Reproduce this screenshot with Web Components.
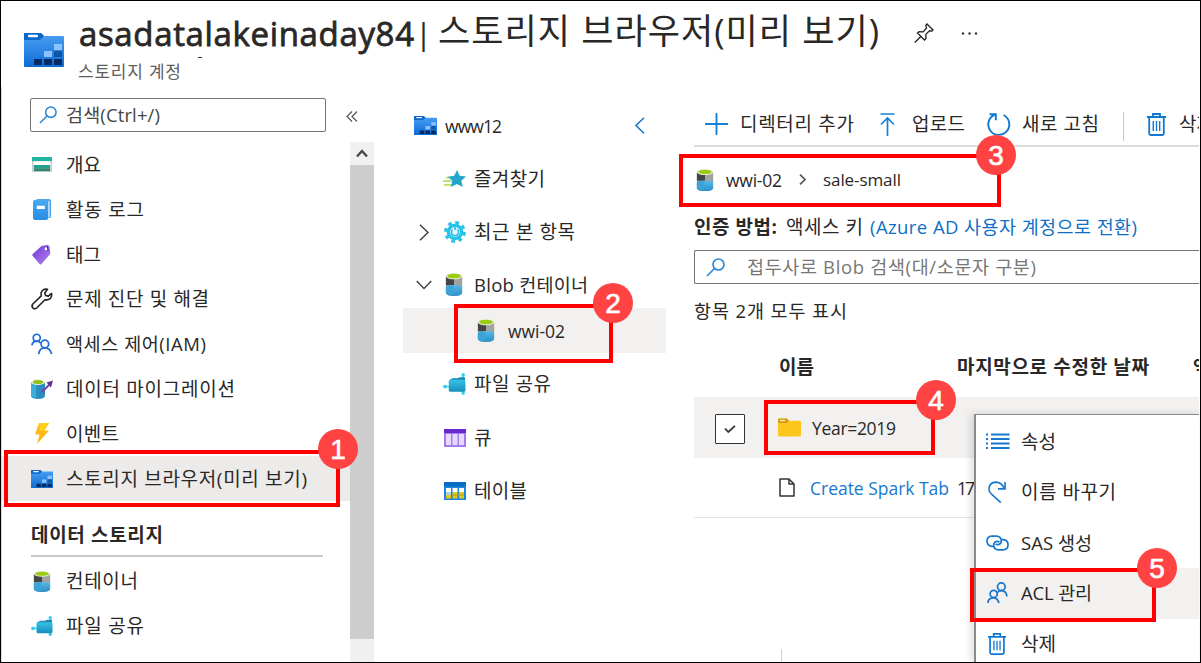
<!DOCTYPE html>
<html lang="ko">
<head>
<meta charset="utf-8">
<title>asadatalakeinaday84 | 스토리지 브라우저(미리 보기)</title>
<style>
html,body{margin:0;padding:0;background:#fff}
body{font-family:"Open Sans","Noto Sans CJK KR",sans-serif;color:#292827;width:1201px;height:663px;overflow:hidden}
</style>
</head>
<body>
<storage-page></storage-page>
<script>
const cylinder = `<defs><linearGradient id="c" x2="0" y2="1"><stop stop-color="#55b9e4"/><stop offset="1" stop-color="#2e90c9"/></linearGradient></defs>
<path d="M1 3h18v17q-1 3-9 3t-9-3z" fill="#9a9a9a"/><path d="M1 4h9v9l-9-1z" fill="#454545"/><path d="M10 5h9v8h-9z" fill="#a2a2a2"/><path d="M1 13q9-2 18 0v7q-1 3-9 3t-9-3z" fill="url(#c)"/><path d="M3 13h6v9q-5 0-8-2v-6z" fill="#3ca3d8"/><ellipse cx="10" cy="3.2" rx="9" ry="3.1" fill="#e4ecd2"/><ellipse cx="10" cy="3" rx="7.6" ry="2.3" fill="#9ccc12"/>`;
const folder = `<defs><linearGradient id="f" x2="0" y2="1"><stop stop-color="#4da2f4"/><stop offset="1" stop-color="#0c6bd4"/></linearGradient></defs>
<path d="M0 1q0-1 1-1h16l3 3h19q1 0 1 1v29q0 1-1 1H1q-1 0-1-1z" fill="url(#f)"/><path d="M0 7V1q0-1 1-1h16l3 3-3 3q-1 1-3 1z" fill="#0a66c8"/><rect x="4" y="1.8" width="10" height="2.4" rx="1" fill="#fff"/>
<path d="M30 11h8v6h-8zM20 18h8v6h-8z" fill="#8dc1ff"/><path d="M30 18h8v6h-8z" fill="#0d58a6"/><path d="M10 26h8v6h-8zM20 26h8v6h-8zM30 26h8v6h-8z" fill="#062b63"/>`;
const share = `<defs><linearGradient id="s" x2="0" y2="1"><stop stop-color="#38c3e6"/><stop offset="1" stop-color="#168dbd"/></linearGradient></defs><path d="M2 13h6M19 2v17" stroke="#35c8ee" stroke-width="1.2"/><circle cx="2" cy="13" r="1.9" fill="#35cdf2"/><circle cx="19.3" cy="1.8" r="1.7" fill="#35cdf2"/><circle cx="19.3" cy="19.2" r="1.7" fill="#35cdf2"/><path d="M6 7l3-2h5l2-1h5v13H6z" fill="#188bb5"/><rect x="5.5" y="6.5" width="16" height="11.5" rx="1.5" fill="url(#s)"/>`;
const trash = `<g fill="none" stroke="#0f78d4" stroke-width="1.8"><path d="M0 4h19M6 4V1h7v3M2.2 4v16.5q0 1.5 1.5 1.5h11.600q1.500 0 1.500-1.500V4"/><path d="M6.300 8v10M9.500 8v10M12.700 8v10" stroke-width="1.400"/></g>`;
const lens = c => `<g fill="none" stroke="${c}" stroke-width="1.6"><circle cx="12.500" cy="6.500" r="5.500"/><path d="M8.500 10.500L1 18"/></g>`;
const people = c => `<g fill="none" stroke="${c}" stroke-width="1.800"><circle cx="6" cy="5" r="3.700"/><path d="M1 13q.5-4.500 5-4.500 3 0 4 2"/><circle cx="14.500" cy="11.500" r="4"/><path d="M8 22q1-6.500 6.500-6.500t7 6.500"/></g>`;
const ICONS = {
  folder:['40 34',folder], cylinder:['20 23',cylinder], share:['22 21',share], trash:['19 23',trash],
  lens:['19 19',lens('#2a86d8')],
  people:['23 23',people('#1d6ad8')],
  acl:['22 23',`<g fill="none" stroke="#1a73c8" stroke-width="1.800"><circle cx="15" cy="5" r="4"/><path d="M11 11q1-2 4-2 5 0 6 6"/><circle cx="7" cy="12.500" r="3.700"/><path d="M1 22q0-5.500 6-5.500 4 0 5.500 5.500"/></g>`],
  overview:['20 17',`<path d="M0 4h20v12H0z" fill="#c9cbcd"/><path d="M0 0h20v4.500H0z" fill="#20b5a0"/><path d="M1.500 4.500h17v4h-17z" fill="#fff"/><path d="M2 8.500h16v3.500H2z" fill="#22a18d"/><path d="M2 12h16v3H2z" fill="#2d8877"/>`],
  log:['19 22',`<defs><linearGradient id="l" x2="0" y2="1"><stop stop-color="#45a9f2"/><stop offset="1" stop-color="#2a8ce2"/></linearGradient></defs><rect x="3" y="0" width="16" height="20" rx="2" fill="#4ea4e4"/><path d="M16 2h1.500v17H16z" fill="#d6ecfb"/><rect x="0" y="1" width="16" height="21" rx="2" fill="url(#l)"/><rect x="4" y="7" width="8.500" height="3.500" fill="#fff"/>`],
  tag:['20 20',`<defs><linearGradient id="t" x2="1" y2="1"><stop stop-color="#6d32d8"/><stop offset="1" stop-color="#b68ae8"/></linearGradient></defs><path d="M10 1l6-1q2 0 2.500 2l.8 6q0 1-1 2L10 19q-1 1-2 0L.8 11q-1-1 0-2z" fill="url(#t)"/><circle cx="14.800" cy="3.800" r="1.500" fill="#fff"/><path d="M16 1l1 5" stroke="#4c1ab0" stroke-width="1"/>`],
  wrench:['22 22',`<path d="M20.600 5.500l-3.300 2.600-2.700-.6-.9-2.600 2.800-3.600q-3.300-.8-5.400 1.500-1.800 2.200-.8 5L1.800 16q-1.600 2 0 3.800 2 1.800 3.900.2l8.300-8.300q3.200.8 5.400-1.300 1.900-2.100 1.200-4.900z" fill="none" stroke="#222" stroke-width="1.600" stroke-linejoin="round"/>`],
  migrate:['22 20',`<path d="M0 3h14v14q-1 3-7 3t-7-3z" fill="#2c8cbd"/><path d="M0 3h5v16q-4-.5-5-2z" fill="#3caddb"/><ellipse cx="7" cy="3" rx="7" ry="3" fill="#eef3dc"/><ellipse cx="7" cy="3" rx="5.200" ry="2.100" fill="#8fc31a"/><path d="M11 13l8-8" stroke="#7a3fa8" stroke-width="2"/><path d="M15.500 3.500L22 1.500 20 8.500z" fill="#663090"/>`],
  bolt:['16 21',`<path d="M5 0h10L10.500 7.500H15L3 21l2.500-9.500H1z" fill="#fdb913"/><path d="M5 0h10L10.500 7.500 6 8z" fill="#ffce20"/>`],
  star:['23 19',`<path d="M3 8h8M0 11.800h9M1 15.600h8" stroke="#b5e06a" stroke-width="1.800"/><path d="M14 0l2.700 6.200 6.300.7-4.700 4.400L19.700 18 14 14.700 7.800 18l1.600-6.700L4.900 7l6.300-.8z" fill="#22a6cc"/>`],
  gear:['22 22',`<circle cx="11" cy="11" r="6.500" fill="none" stroke="#25c2ea" stroke-width="3.600"/><circle cx="11" cy="11" r="9.400" fill="none" stroke="#25c2ea" stroke-width="3" stroke-dasharray="3.700 3.682"/><circle cx="11" cy="11" r="4.900" fill="#e4f8fd"/><path d="M8.500 8.500a3.600 3.600 0 1 0 5 0M11 6v3" fill="none" stroke="#25bde4" stroke-width="1.600"/>`],
  queue:['22 18',`<path d="M0 0h22v18H0z" fill="#a57cec"/><path d="M0 0h22v4H0z" fill="#6a28cc"/><path d="M2 5h5v11H2zM8.500 5h5v11h-5zM15 5h5v11h-5z" fill="#e8d9ff"/>`],
  table:['22 18',`<path d="M0 0h22v18H0z" fill="#1f86dd"/><path d="M0 0h22v4.500H0z" fill="#0a6cc4"/><path d="M2 6h5v4H2zM8.500 6h5v4h-5zM15 6h5v4h-5z" fill="#fff"/><path d="M2 10h5v3H2z" fill="#9ed5ef"/><path d="M2 13h5v3.500H2zM8.500 10h5v6.500h-5zM15 10h5v6.500h-5z" fill="#e0c81c"/><path d="M8 13h12" stroke="#b69c10"/>`],
  plus:['23 22',`<path d="M0 11h23M11.500 0v22" stroke="#1580d8" stroke-width="1.900"/>`],
  upload:['15 23',`<path d="M.5 1h14M7.500 23V5M1 11.500L7.500 5l6.500 6.500" fill="none" stroke="#1580d8" stroke-width="1.700"/>`],
  refresh:['24 23',`<path d="M16.500 2A10.500 10.500 0 1 1 8 1.600M2.600 1.200h6.200v6" fill="none" stroke="#0f78d4" stroke-width="1.900"/>`],
  yellow:['23 19',`<path d="M0 2q0-1.500 1.500-1.500H9l2 2.200h10.500Q23 2.700 23 4v13q0 1.500-1.500 1.500h-20Q0 18.500 0 17z" fill="#fcc61c"/><path d="M0 2q0-1.500 1.500-1.500H9L11 2.700 9 5H0z" fill="#d99c10"/><path d="M2 2.500h5" stroke="#fff3c0" stroke-width="1.300"/>`],
  file:['16 19',`<path d="M1 1h9l5 5v12H1zM10 1v5h5" fill="#fff" stroke="#333" stroke-width="1.500" stroke-linejoin="round"/>`],
  check:['12 8',`<path d="M1 3.500L4.300 7 11 .8" fill="none" stroke="#333" stroke-width="1.800"/>`],
  list:['24 17',`<path d="M0 1.500h2M0 6h2M0 10.500h2M0 15h2M5 1.500h18.500M5 6h18.500M5 10.500h18.500M5 15h18.500" stroke="#1878d0" stroke-width="1.900"/>`],
  rename:['19 23',`<path d="M13.500 22.500L4 14Q1 11.500 1 8.500 1.200 1.500 8.500 1.200 14 1.200 17.500 8M18 1v7.200h-7.500" fill="none" stroke="#1878d0" stroke-width="1.700"/>`],
  link:['24 17',`<g fill="none" stroke="#1878d0" stroke-width="1.800"><path d="M8 12H6Q1 11.500 1 6.500T6 1.200h5Q15.500 1.500 16 6q0 3-2.500 4-2 .7-3.500-.5"/><path d="M16 5h2q5 .5 5 5.300T18 15.800h-5Q8.500 15.500 8 11q0-3 2.500-4 2-.7 3.500.5"/></g>`],
  pin:['20 20',`<g fill="none" stroke="#222" stroke-width="1.300"><path d="M13 1l6 6-1.500 1.200-2-.5-3.700 3.700.2 4L10.500 17 3.500 10l1.600-1.300 4 .2L12.500 5l-.7-2.500z"/><path d="M7 13.300L.8 19.500"/></g>`],
  dots:['17 3',`<circle cx="2" cy="1.500" r="1.200" fill="#333"/><circle cx="8.500" cy="1.500" r="1.200" fill="#333"/><circle cx="15" cy="1.500" r="1.200" fill="#333"/>`],
  dleft:['12 11',`<path d="M6 .5L1 5.500l5 5M11 .5L6 5.500l5 5" fill="none" stroke="#555" stroke-width="1.200"/>`],
  left:['10 17',`<path d="M9 .7L1 8.500l8 7.800" fill="none" stroke="#1878d0" stroke-width="1.600"/>`],
  right:['10 17',`<path d="M1 .7l8 7.800-8 7.800" fill="none" stroke="#444" stroke-width="1.500"/>`],
  sright:['7 11',`<path d="M1 .7l5 4.800-5 4.800" fill="none" stroke="#555" stroke-width="1.700"/>`],
  down:['16 10',`<path d="M.7 1L8 8.500 15.300 1" fill="none" stroke="#444" stroke-width="1.500"/>`],
  up:['12 9',`<path d="M1 7.500L6 2l5 5.500" fill="none" stroke="#484848" stroke-width="2.400"/>`]
};
class UiIcon extends HTMLElement{
  connectedCallback(){
    const [vb,art]=ICONS[this.getAttribute('name')];
    const n=vb.split(' '), w=this.getAttribute('w')||n[0], h=this.getAttribute('h')||n[1];
    this.attachShadow({mode:'open'}).innerHTML=`<style>:host{display:block;flex:none;width:${w}px;height:${h}px}svg{display:block;overflow:visible}</style><svg width="${w}" height="${h}" viewBox="0 0 ${vb}" preserveAspectRatio="none">${art}</svg>`;
  }
}
customElements.define('ui-icon',UiIcon);

/* A single-line label that tracks its letters to fill the width in its w attribute. */
class UiText extends HTMLElement{
  connectedCallback(){
    const t=this.textContent, size=!/[A-Za-z0-9]/.test(t)?19:/[가-힣]/.test(t)?18.5:17.5;
    this.attachShadow({mode:'open'}).innerHTML=`<style>:host{display:block;flex:none;white-space:pre;font-size:${size}px;line-height:26px}span{display:inline-block}</style><span><slot></slot></span>`;
    const w=+this.getAttribute('w'), s=this.shadowRoot.querySelector('span');
    if(w){
      this.style.width=w+'px';
      const n=[...t].length;
      s.style.letterSpacing=(w-s.getBoundingClientRect().width)/Math.max(1,n-1)+'px';
    }
  }
}
customElements.define('ui-text',UiText);

class NavRow extends HTMLElement{
  connectedCallback(){
    const g=k=>this.getAttribute(k);
    this.attachShadow({mode:'open'}).innerHTML=`<style>:host{display:flex;align-items:center;flex:none;height:44.8px;box-sizing:border-box;padding-left:28px}
    :host([selected]){background:#edebe9}.i{width:36px;display:flex;align-items:center}.i ui-icon{margin-left:${g('shift')||0}px}</style>
    <div class="i"><ui-icon name="${g('icon')}" w="${g('iw')}" h="${g('ih')}"></ui-icon></div><ui-text w="${g('w')}">${g('label')}</ui-text>`;
  }
}
customElements.define('nav-row',NavRow);

class TreeRow extends HTMLElement{
  connectedCallback(){
    const g=k=>this.getAttribute(k), ch=g('chevron');
    this.attachShadow({mode:'open'}).innerHTML=`<style>:host{display:flex;align-items:center;flex:none;box-sizing:border-box}
    :host([selected]){background:#f2f1f0}.c{width:${g('indent')||40}px;display:flex;flex:none}.c ui-icon{margin-left:${ch==='down'?13:16}px}.i{width:31px;display:flex;flex:none}.i ui-icon{margin-left:${g('shift')||0}px}</style>
    <div class="c">${ch?`<ui-icon name="${ch}"></ui-icon>`:''}</div><div class="i"><ui-icon name="${g('icon')}" w="${g('iw')}" h="${g('ih')}"></ui-icon></div><ui-text w="${g('w')}">${g('label')}</ui-text>`;
  }
}
customElements.define('tree-row',TreeRow);

class SideNav extends HTMLElement{
  connectedCallback(){
    this.attachShadow({mode:'open'}).innerHTML=`<style>
    :host{display:grid;grid-template-columns:348px 24px;grid-template-rows:55px 1fr;width:372px;border-left:1px solid #dcdcdc;overflow:hidden}
    .top{grid-column:1/3;display:flex;align-items:flex-start;padding:11px 0 0 28px}
    .box{box-sizing:border-box;width:296px;height:34px;border:1.500px solid #757371;border-radius:2px;display:flex;align-items:center;padding-left:8px}
    .box ui-text{margin-left:9px;color:#484644}
    .list{display:flex;flex-direction:column;padding-top:.6px}
    .h{font-weight:700;height:56.500px;margin-left:29px;width:292px;box-sizing:border-box;border-bottom:2px solid #c8c8c8;display:flex;align-items:center;padding-top:14px;flex:none;margin-bottom:1.500px}
    .bar{display:flex;flex-direction:column;background:#f0f0f0}.btn{height:23px;display:flex;align-items:center;justify-content:center;flex:none}.thumb{height:474px;background:#cdcdcd;flex:none}
    </style>
    <div class="top"><div class="box"><ui-icon name="lens" w="18" h="18"></ui-icon><ui-text w="94">검색(Ctrl+/)</ui-text></div><ui-icon name="dleft" style="margin:13px 0 0 20px"></ui-icon></div>
    <div class="list">
      <nav-row icon="overview" iw="20" ih="16" shift="2" w="35" label="개요"></nav-row>
      <nav-row icon="log" iw="18" ih="21" shift="3" w="78" label="활동 로그"></nav-row>
      <nav-row icon="tag" iw="19" ih="20" shift="2" w="35" label="태그"></nav-row>
      <nav-row icon="wrench" iw="22" ih="22" shift="1" w="143" label="문제 진단 및 해결"></nav-row>
      <nav-row icon="people" iw="22" ih="22" shift="1" w="140" label="액세스 제어(IAM)"></nav-row>
      <nav-row icon="migrate" iw="22" ih="20" shift="1" w="169" label="데이터 마이그레이션"></nav-row>
      <nav-row icon="bolt" iw="16" ih="21" shift="4" w="53" label="이벤트"></nav-row>
      <nav-row selected icon="folder" iw="22" ih="18" shift="1" w="241" label="스토리지 브라우저(미리 보기)"></nav-row>
      <div class="h"><ui-text w="132">데이터 스토리지</ui-text></div>
      <nav-row icon="cylinder" iw="18" ih="21" shift="3" w="72" label="컨테이너"></nav-row>
      <nav-row icon="share" iw="22" ih="20" shift="1" w="78" label="파일 공유"></nav-row>
    </div>
    <div class="bar"><div class="btn"><ui-icon name="up"></ui-icon></div><div class="thumb"></div></div>`;
  }
}
customElements.define('side-nav',SideNav);

class BlobTree extends HTMLElement{
  connectedCallback(){
    this.attachShadow({mode:'open'}).innerHTML=`<style>:host{display:flex;flex-direction:column;width:263px;margin-left:29px;padding-top:11px;box-sizing:border-box}
    .head{display:flex;align-items:center;height:54px;padding-left:11px;flex:none}</style>
    <div class="head"><ui-icon name="folder" w="23" h="19"></ui-icon><ui-text w="57" style="margin:2px 0 0 8px">www12</ui-text><ui-icon name="left" style="margin-left:133px"></ui-icon></div>
    <tree-row style="height:52px;margin-top:1px" icon="star" iw="23" ih="18" w="71" label="즐겨찾기"></tree-row>
    <tree-row style="height:54px" chevron="right" icon="gear" iw="22" ih="22" shift="1" w="101" label="최근 본 항목"></tree-row>
    <tree-row style="height:51px" chevron="down" icon="cylinder" iw="18" ih="23" shift="2" w="114" label="Blob 컨테이너"></tree-row>
    <tree-row style="height:45px;margin-top:-2px" selected indent="74" icon="cylinder" iw="18" ih="23" w="57" label="wwi-02"></tree-row>
    <tree-row style="height:62px" icon="share" iw="23" ih="22" w="77" label="파일 공유"></tree-row>
    <tree-row style="height:45px" icon="queue" iw="22" ih="18" shift="1" w="16" label="큐"></tree-row>
    <tree-row style="height:62px" icon="table" iw="22" ih="18" shift="1" w="53" label="테이블"></tree-row>`;
  }
}
customElements.define('blob-tree',BlobTree);

class BlobPane extends HTMLElement{
  connectedCallback(){
    this.attachShadow({mode:'open'}).innerHTML=`<style>:host{display:flex;flex-direction:column;width:505px;margin-left:28px;overflow:hidden}
    div{display:flex;align-items:center;flex:none;box-sizing:border-box}
    .tools{height:60px;padding:16px 0 0 11px;border-bottom:2px solid #dcdcdc;width:520px}
    .crumb{height:65px;padding-left:2px}
    .auth{height:30px}.search{height:34px;margin-top:8px;border:1.500px solid #757371;border-right:0;border-radius:2px 0 0 2px;padding-left:11px}
    .search ui-text{color:#797775;margin-left:22px}
    .count{height:53px}.cols{height:60px;font-weight:700;padding-left:85px}
    .row{height:61px;background:#f2f1f0;padding-left:21px}.row2{height:60px;border-bottom:1px solid #e4e4e4;padding-left:85px}
    .cb{width:30px;height:30px;border:1.500px solid #333;background:#fff;justify-content:center;border-radius:1px;margin-top:3px}
    .foot{height:14px;margin:131px 0 0 87px;border-left:1px solid #d0d0d0}
    .sep{width:1px;height:29px;background:#c8c8c8;margin:4px 0 0 24px}
    </style>
    <div class="tools"><ui-icon name="plus"></ui-icon><ui-text w="114" style="margin-left:12px">디렉터리 추가</ui-text>
    <ui-icon name="upload" style="margin-left:26px"></ui-icon><ui-text w="53" style="margin-left:17px">업로드</ui-text>
    <ui-icon name="refresh" style="margin-left:22px"></ui-icon><ui-text w="77" style="margin-left:11px">새로 고침</ui-text>
    <div class="sep"></div><ui-icon name="trash" style="margin-left:23px"></ui-icon><ui-text w="35" style="margin-left:13px">삭제</ui-text></div>
    <div class="crumb"><ui-icon name="cylinder" w="18" h="22"></ui-icon><ui-text w="56" style="margin-left:12px">wwi-02</ui-text><ui-icon name="sright" style="margin-left:17px"></ui-icon><ui-text w="78" style="margin-left:17px;font-size:17px">sale-small</ui-text></div>
    <div class="auth"><ui-text w="83" style="font-weight:700">인증 방법:</ui-text><ui-text w="77" style="margin-left:9px">액세스 키</ui-text><ui-text w="267" style="margin-left:7px;color:#0f6fc8">(Azure AD 사용자 계정으로 전환)</ui-text></div>
    <div class="search"><ui-icon name="lens"></ui-icon><ui-text w="289">접두사로 Blob 검색(대/소문자 구분)</ui-text></div>
    <div class="count"><ui-text w="153">항목 2개 모두 표시</ui-text></div>
    <div class="cols"><ui-text w="35">이름</ui-text><ui-text w="192" style="margin-left:143px">마지막으로 수정한 날짜</ui-text><ui-text style="margin-left:44px">액</ui-text></div>
    <div class="row"><div class="cb"><ui-icon name="check"></ui-icon></div><ui-icon name="yellow" style="margin-left:33px"></ui-icon><ui-text w="84" style="margin-left:11px">Year=2019</ui-text></div>
    <div class="row2"><ui-icon name="file"></ui-icon><ui-text w="139" style="margin-left:15px;color:#1878d0">Create Spark Tab</ui-text><ui-text w="18" style="margin-left:8px">17</ui-text></div>
    <div class="foot"></div>`;
  }
}
customElements.define('blob-pane',BlobPane);

class ContextMenu extends HTMLElement{
  connectedCallback(){
    const items=[['list',24,17,11,35,'속성'],['rename',18,22,13,95,'이름 바꾸기'],['link',23,16,11,71,'SAS 생성'],['acl',21,22,12,71,'ACL 관리',1],['trash',18,22,13,35,'삭제']];
    this.attachShadow({mode:'open'}).innerHTML=`<style>:host{display:block;box-sizing:border-box;background:#fff;border:2px solid #8a8a8a;border-width:1.500px 0 0 2px;box-shadow:-3px 0 8px #0002;padding-top:1.500px;overflow:hidden}
    .m{height:50.500px;display:flex;align-items:center}.m.on{background:#f2f1f0}.i{width:45px;flex:none}</style>`+
    items.map(([n,w,h,x,t,l,on])=>`<div class="m${on?' on':''}"><div class="i"><ui-icon name="${n}" w="${w}" h="${h}" style="margin-left:${x-1}px"></ui-icon></div><ui-text w="${t}">${l}</ui-text></div>`).join('');
  }
}
customElements.define('context-menu',ContextMenu);

/* Numbered red frame laid over the page. box = left, top, width, height; dot = centre of the number. */
class StepMark extends HTMLElement{
  connectedCallback(){
    const [x,y,w,h]=this.getAttribute('box').split(' ').map(Number),[cx,cy]=this.getAttribute('dot').split(' ').map(Number);
    this.attachShadow({mode:'open'}).innerHTML=`<style>:host{position:absolute;left:${x}px;top:${y}px;width:${w}px;height:${h}px;box-sizing:border-box;border:4px solid #f00}
    b{position:absolute;left:${cx-x-24}px;top:${cy-y-24}px;width:40px;height:40px;border-radius:50%;background:#ff4343;color:#fff;font:28px/42px "Liberation Sans",sans-serif;-webkit-text-stroke:.6px #fff;text-align:center}</style><b><slot></slot></b>`;
  }
}
customElements.define('step-mark',StepMark);

class StoragePage extends HTMLElement{
  connectedCallback(){
    this.attachShadow({mode:'open'}).innerHTML=`<style>
    :host{display:flex;flex-direction:column;position:relative;box-sizing:border-box;width:1201px;height:663px;border:1px solid #000;background:#fff;overflow:hidden}
    header{height:86px;display:flex;padding-left:23px;box-sizing:border-box;flex:none}
    .t{display:flex;flex-direction:column;margin-left:14px}.line{display:flex;height:58px;align-items:flex-start}
    main{display:flex;flex:1;min-height:0}
    context-menu{position:absolute;left:973px;top:413px;width:225px;height:248px}
    .dash{position:absolute;left:197px;top:56px;width:4px;height:1px;background:#333}
    </style>
    <header><ui-icon name="folder" style="margin-top:32px"></ui-icon>
    <div class="t"><div class="line"><ui-text w="335" style="font-size:33px;line-height:44px;-webkit-text-stroke:.8px #292827;margin:11px 0 0 1px">asadatalakeinaday84</ui-text><ui-text style="font-size:31px;line-height:40px;margin:12px 0 0 1px;width:23px">|</ui-text><ui-text w="441" style="font-size:35px;line-height:44px;margin:8px 0 0 0">스토리지 브라우저(미리 보기)</ui-text><ui-icon name="pin" style="margin:22px 0 0 35px"></ui-icon><ui-icon name="dots" style="margin:31px 0 0 27px"></ui-icon></div>
    <ui-text w="103" style="font-size:17px;line-height:26px;color:#605e5c">스토리지 계정</ui-text></div></header>
    <main><side-nav></side-nav><blob-tree></blob-tree><blob-pane></blob-pane></main>
    <context-menu></context-menu><i class="dash"></i>
    <step-mark box="3 449 336 57" dot="337 448">1</step-mark>
    <step-mark box="453 303 159 59" dot="612 302">2</step-mark>
    <step-mark box="678 153 322 53" dot="995 154">3</step-mark>
    <step-mark box="763 399 171 55" dot="935 399">4</step-mark>
    <step-mark box="969 567 186 54" dot="1156 567">5</step-mark>`;
  }
}
customElements.define('storage-page',StoragePage);
</script>
</body>
</html>
